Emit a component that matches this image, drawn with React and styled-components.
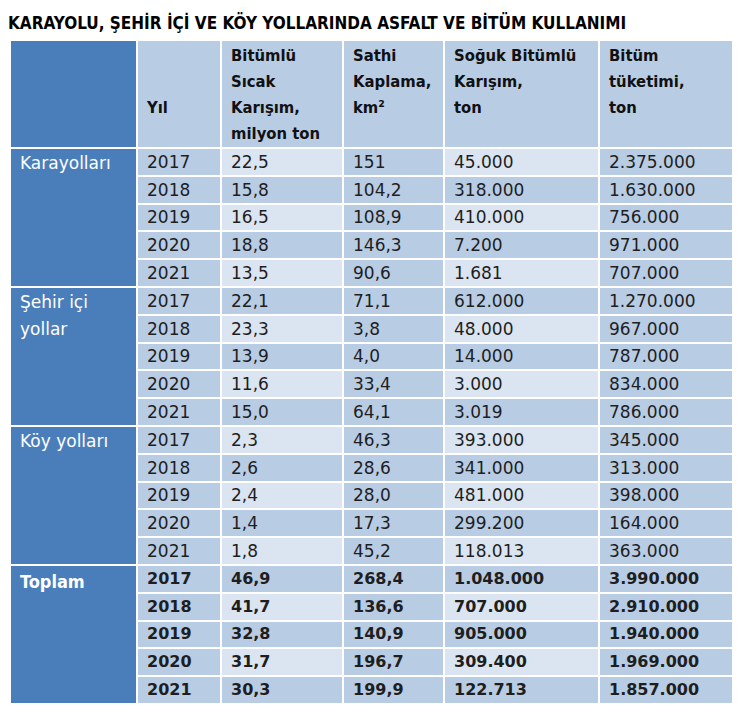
import React from 'react';
import styled, { createGlobalStyle } from 'styled-components';

const Global = createGlobalStyle`
  html, body { margin: 0; padding: 0; background: #ffffff; }
`;

const DARK = '#4a7ebb';
const MEDIUM = '#b8cce4';
const LIGHT = '#dbe5f1';

const Page = styled.div`
  width: 741px;
  box-sizing: border-box;
  padding: 11px 9px 0 9px;
`;

const Title = styled.h1`
  margin: 0 0 0 -1px;
  height: 28px;
  font-family: "DejaVu Sans Condensed", "DejaVu Sans", sans-serif;
  font-stretch: condensed;
  font-weight: bold;
  font-size: 17px;
  line-height: 24px;
  color: #000;
  white-space: nowrap;
`;

const Table = styled.table`
  border-collapse: collapse;
  table-layout: fixed;
  width: 723px;
`;

const HeadRow = styled.tr`
  height: 108px;
`;

const HeadCell = styled.th`
  background: ${(p) => (p.$dark ? DARK : MEDIUM)};
  border: 2px solid #fff;
  padding: ${(p) => (p.$offset ? '54px' : '2px')} 4px 0 9px;
  vertical-align: top;
  text-align: left;
  font-family: "DejaVu Sans Condensed", "DejaVu Sans", sans-serif;
  font-stretch: condensed;
  font-weight: bold;
  font-size: 16.5px;
  line-height: 26px;
  color: #111;
`;

const GroupCell = styled.td`
  background: ${DARK};
  border: 2px solid #fff;
  padding: ${(p) => (p.$bold ? '2px' : '1px')} 4px 0 9px;
  vertical-align: top;
  font-family: ${(p) => (p.$bold ? '"DejaVu Sans Condensed", "DejaVu Sans", sans-serif' : '"DejaVu Sans", sans-serif')};
  font-stretch: ${(p) => (p.$bold ? 'condensed' : 'normal')};
  font-weight: ${(p) => (p.$bold ? 'bold' : 'normal')};
  font-size: ${(p) => (p.$bold ? '18px' : '17px')};
  line-height: 27px;
  color: #fff;
`;

const DataCell = styled.td`
  background: ${(p) => (p.$light ? LIGHT : MEDIUM)};
  border: 2px solid #fff;
  height: 25.8px;
  padding: 0 4px 0 9px;
  vertical-align: middle;
  font-family: "DejaVu Sans", sans-serif;
  font-weight: ${(p) => (p.$bold ? 'bold' : 'normal')};
  font-size: ${(p) => (p.$bold ? '16px' : '17px')};
  line-height: 20px;
  color: #1e1e1e;
  white-space: nowrap;
`;

const groups = [
  {
    name: 'Karayolları',
    rows: [
      ['2017', '22,5', '151', '45.000', '2.375.000'],
      ['2018', '15,8', '104,2', '318.000', '1.630.000'],
      ['2019', '16,5', '108,9', '410.000', '756.000'],
      ['2020', '18,8', '146,3', '7.200', '971.000'],
      ['2021', '13,5', '90,6', '1.681', '707.000'],
    ],
  },
  {
    name: 'Şehir içi yollar',
    rows: [
      ['2017', '22,1', '71,1', '612.000', '1.270.000'],
      ['2018', '23,3', '3,8', '48.000', '967.000'],
      ['2019', '13,9', '4,0', '14.000', '787.000'],
      ['2020', '11,6', '33,4', '3.000', '834.000'],
      ['2021', '15,0', '64,1', '3.019', '786.000'],
    ],
  },
  {
    name: 'Köy yolları',
    rows: [
      ['2017', '2,3', '46,3', '393.000', '345.000'],
      ['2018', '2,6', '28,6', '341.000', '313.000'],
      ['2019', '2,4', '28,0', '481.000', '398.000'],
      ['2020', '1,4', '17,3', '299.200', '164.000'],
      ['2021', '1,8', '45,2', '118.013', '363.000'],
    ],
  },
  {
    name: 'Toplam',
    bold: true,
    rows: [
      ['2017', '46,9', '268,4', '1.048.000', '3.990.000'],
      ['2018', '41,7', '136,6', '707.000', '2.910.000'],
      ['2019', '32,8', '140,9', '905.000', '1.940.000'],
      ['2020', '31,7', '196,7', '309.400', '1.969.000'],
      ['2021', '30,3', '199,9', '122.713', '1.857.000'],
    ],
  },
];

const widths = [127, 84, 122, 101, 155, 134];

export default function App() {
  let rowIndex = 0;
  return (
    <Page>
      <Global />
      <Title>KARAYOLU, ŞEHİR İÇİ VE KÖY YOLLARINDA ASFALT VE BİTÜM KULLANIMI</Title>
      <Table>
        <colgroup>
          {widths.map((w, i) => (
            <col key={i} style={{ width: w }} />
          ))}
        </colgroup>
        <thead>
          <HeadRow>
            <HeadCell $dark />
            <HeadCell $offset>Yıl</HeadCell>
            <HeadCell>
              Bitümlü
              <br />
              Sıcak
              <br />
              Karışım,
              <br />
              milyon ton
            </HeadCell>
            <HeadCell>
              Sathi
              <br />
              Kaplama,
              <br />
              km²
            </HeadCell>
            <HeadCell>
              Soğuk Bitümlü
              <br />
              Karışım,
              <br />
              ton
            </HeadCell>
            <HeadCell>
              Bitüm
              <br />
              tüketimi,
              <br />
              ton
            </HeadCell>
          </HeadRow>
        </thead>
        <tbody>
          {groups.map((g) =>
            g.rows.map((r, ri) => {
              rowIndex += 1;
              const banded = rowIndex % 2 === 1;
              return (
                <tr key={g.name + ri}>
                  {ri === 0 && (
                    <GroupCell rowSpan={g.rows.length} $bold={g.bold}>
                      {g.name}
                    </GroupCell>
                  )}
                  {r.map((v, ci) => (
                    <DataCell key={ci} $light={banded && ci % 2 === 1} $bold={g.bold}>
                      {v}
                    </DataCell>
                  ))}
                </tr>
              );
            })
          )}
        </tbody>
      </Table>
    </Page>
  );
}
